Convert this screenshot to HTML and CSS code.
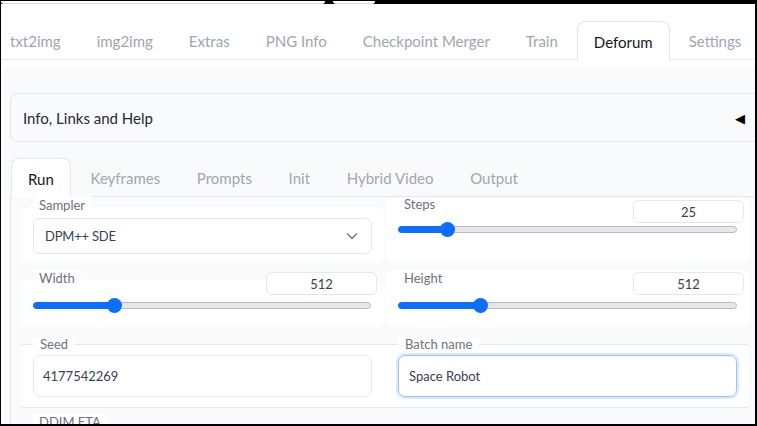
FILE: index.html
```html
<!DOCTYPE html>
<html>
<head>
<meta charset="utf-8">
<link rel="stylesheet" href="styles.css">
</head>
<body>
<div class="frame">
  <div class="topstrip"><div class="tb1"></div><div class="tb2"></div></div>
  <nav class="maintabs">
    <span class="tab">txt2img</span>
    <span class="tab">img2img</span>
    <span class="tab">Extras</span>
    <span class="tab">PNG Info</span>
    <span class="tab">Checkpoint Merger</span>
    <span class="tab">Train</span>
    <span class="tab sel">Deforum</span>
    <span class="tab">Settings</span>
  </nav>
  <div class="panel">
    <div class="accordion"><span>Info, Links and Help</span><span class="tri">&#9664;</span></div>
    <nav class="subtabs">
      <span class="tab sel">Run</span>
      <span class="tab">Keyframes</span>
      <span class="tab">Prompts</span>
      <span class="tab">Init</span>
      <span class="tab">Hybrid Video</span>
      <span class="tab">Output</span>
    </nav>
    <div class="subpanel">
      <div class="grid row1">
        <div class="blk sampler">
          <div class="head"><span class="chip">Sampler</span></div>
          <div class="body">
            <div class="select"><span>DPM++ SDE</span>
              <svg width="14" height="14" viewBox="0 0 14 14"><polyline points="2.5,5 7,9.5 11.5,5" fill="none" stroke="#6b7280" stroke-width="1.4" stroke-linecap="round" stroke-linejoin="round"/></svg>
            </div>
          </div>
        </div>
        <div class="blk right steps">
          <div class="head"><span class="chip">Steps</span><span class="num">25</span></div>
          <div class="body">
            <div class="slider"><div class="fill" style="width:48px"></div><div class="thumb" style="left:48px"></div></div>
          </div>
        </div>
      </div>
      <div class="grid row2">
        <div class="blk">
          <div class="head"><span class="chip">Width</span><span class="num">512</span></div>
          <div class="body">
            <div class="slider"><div class="fill" style="width:80px"></div><div class="thumb" style="left:80px"></div></div>
          </div>
        </div>
        <div class="blk right">
          <div class="head"><span class="chip">Height</span><span class="num">512</span></div>
          <div class="body">
            <div class="slider"><div class="fill" style="width:81px"></div><div class="thumb" style="left:81px"></div></div>
          </div>
        </div>
      </div>
      <div class="group">
        <div class="cell"><span class="glabel">Seed</span><div class="text">4177542269</div></div>
        <div class="cell"><span class="glabel">Batch name</span><div class="text focus">Space Robot</div></div>
      </div>
      <div class="blk ddim">
        <div class="head"><span class="chip">DDIM ETA</span></div>
      </div>
    </div>
  </div>
</div>
</body>
</html>
```
FILE: styles.css
```css
html, body {
  margin: 0;
  padding: 0;
  background: #000;
}
body {
  font-family: Lato, "Liberation Sans", sans-serif;
  width: 757px;
  height: 426px;
  overflow: hidden;
}
.frame {
  margin-left: 1px;
  width: 754px;
  height: 424px;
  overflow: hidden;
  background: #fff;
}
.topstrip {
  height: 4px;
  background: #000;
  display: flex;
  gap: 8px;
}
.tb1, .tb2 {
  margin-top: 1px;
  height: 2px;
  background: #fff;
  border-bottom: 1px solid #d9dce1;
  border-radius: 0 0 6px 6px;
}
.tb1 { width: 324px; }
.tb2 { width: 42px; }

.maintabs, .subtabs {
  display: flex;
  border-bottom: 1px solid #e5e7eb;
  height: 38px;
  white-space: nowrap;
}
.maintabs {
  margin: 17px 0 0 -8px;
}
.tab {
  display: flex;
  align-items: center;
  padding: 0 16px;
  height: 38px;
  margin-right: 2px;
  border: 1px solid transparent;
  border-bottom: none;
  border-radius: 8px 8px 0 0;
  font-size: 15px;
  color: #a0a6b1;
}
.tab.sel {
  border-color: #e5e7eb;
  background: #fff;
  color: #111827;
  height: 39px;
}
.panel {
  margin: 7px 0 0 2px;
  width: 780px;
  background: #f9fafb;
  border-radius: 6px 0 0 0;
  padding: 26px 0 0 7px;
  height: 400px;
}
.accordion {
  height: 47px;
  border: 1px solid #e5e7eb;
  border-radius: 7px;
  display: flex;
  align-items: center;
  justify-content: space-between;
  padding: 0 14px 0 12px;
  box-sizing: content-box;
  font-size: 15px;
  color: #1f2937;
  width: 723px;
}
.tri {
  font-size: 13px;
  color: #000;
  margin-right: 1px;
}
.subtabs {
  margin: 16px 0 0 1px;
}
.subtabs .tab {
  margin-right: 2.7px;
}
.subtabs .tab.sel {
  background: #fff;
}
.subpanel {
  border-left: 1px solid #e5e7eb;
  padding-left: 9px;
}
.grid {
  display: grid;
  grid-template-columns: 364px 365px;
  column-gap: 1px;
  align-items: start;
}
.row2 { margin-top: 7px; }
.blk {
  display: flex;
  flex-direction: column;
}
.head {
  display: flex;
  align-items: flex-start;
  height: 10px;
  padding-left: 13px;
}
.blk.right .head {
  background: #fff;
  border-radius: 8px 8px 0 0;
  padding-left: 13px;
}
.chip {
  position: relative;
  z-index: 1;
  background: #fff;
  height: 10px;
  line-height: 17px;
  padding: 0 6px;
  font-size: 13px;
  color: #6b7280;
  white-space: nowrap;
}
.steps .chip { line-height: 13px; }
.num {
  position: relative;
  z-index: 1;
  margin: 2px 7px 0 auto;
  width: 109px;
  height: 21px;
  border: 1px solid #e5e7eb;
  border-radius: 6px;
  background: #fff;
  font-size: 13px;
  color: #374151;
  display: flex;
  align-items: center;
  justify-content: center;
}
.right .num { margin-right: 6px; }
.body {
  background: #fff;
  border-radius: 0 0 8px 8px;
  padding: 0 13px;
  height: 47px;
}
.blk:not(.right) .body { border-radius: 8px; }
.sampler { margin-top: -1px; }
.sampler .head { height: 11px; }
.sampler .chip { height: 11px; line-height: 19px; }
.sampler .body { height: 56px; padding: 11px 12px 0 13px; box-sizing: border-box; }
.steps { margin-top: 1px; }
.steps .body { height: 55px; padding-top: 18px; box-sizing: border-box; }
.row2 .body { padding-top: 22px; box-sizing: border-box; }
.select {
  height: 34px;
  border: 1px solid #e5e7eb;
  border-radius: 7px;
  display: flex;
  align-items: center;
  justify-content: space-between;
  padding: 0 12px 0 11px;
  font-size: 13px;
  letter-spacing: -0.2px;
  color: #374151;
}
.slider {
  position: relative;
  height: 5px;
  border: 1px solid #b8bcc4;
  border-radius: 4px;
  background: #e5e7eb;
}
.fill {
  height: 100%;
  background: #0b6efd;
  border-radius: 4px 0 0 4px;
  margin: -1px 0 0 -1px;
  border: 1px solid #0b6efd;
}
.thumb {
  position: absolute;
  top: -5px;
  width: 15px;
  height: 15px;
  margin-left: -7px;
  border-radius: 50%;
  background: #0b6efd;
}
.group {
  margin-top: 17px;
  width: 729px;
  background: #fff;
  border-top: 1px solid #e5e7eb;
  border-bottom: 1px solid #e5e7eb;
  border-radius: 4px;
  display: grid;
  grid-template-columns: 365px 364px;
  padding: 10px 0;
}
.cell {
  position: relative;
  padding-left: 13px;
}
.glabel {
  position: absolute;
  top: -17px;
  left: 13px;
  background: #fff;
  padding: 0 7px;
  font-size: 13px;
  line-height: 12px;
  height: 12px;
  color: #6b7280;
}
.text {
  width: 319px;
  height: 40px;
  border: 1px solid #e5e7eb;
  border-radius: 7px;
  padding: 0 9px;
  display: flex;
  align-items: center;
  font-size: 13px;
  color: #374151;
}
.text.focus {
  border-color: #93c5fd;
  box-shadow: 0 0 0 2px #dbeafe;
  padding-left: 10px;
  width: 318px;
}
.ddim { margin-top: 6px; }
```
